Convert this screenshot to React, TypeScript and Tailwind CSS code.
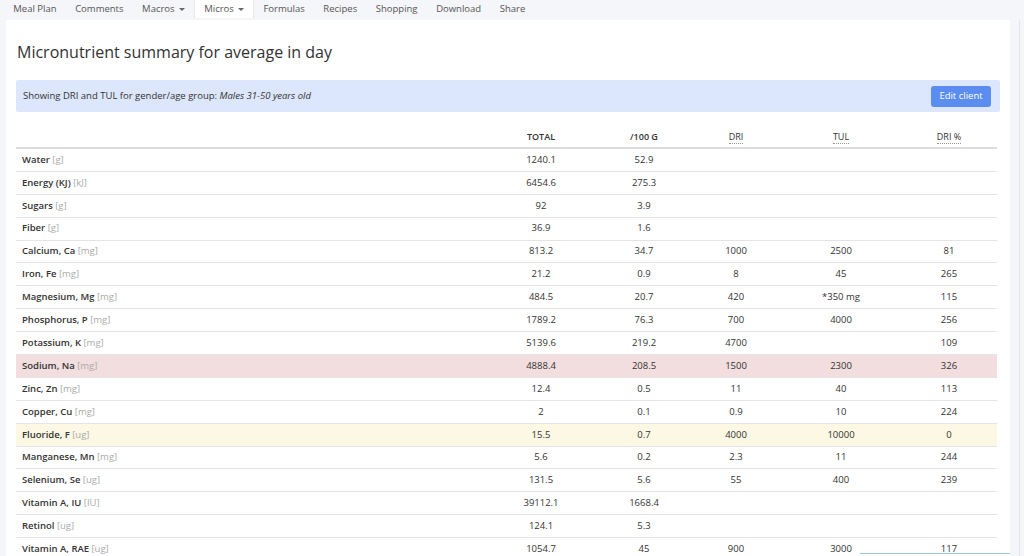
import React from "react";

type Row = { name: string; unit: string; total: string; per: string; dri?: string; tul?: string; pct?: string; tone?: "red" | "yellow" };

const rows: Row[] = [
  { name: "Water", unit: "[g]", total: "1240.1", per: "52.9" },
  { name: "Energy (KJ)", unit: "[kJ]", total: "6454.6", per: "275.3" },
  { name: "Sugars", unit: "[g]", total: "92", per: "3.9" },
  { name: "Fiber", unit: "[g]", total: "36.9", per: "1.6" },
  { name: "Calcium, Ca", unit: "[mg]", total: "813.2", per: "34.7", dri: "1000", tul: "2500", pct: "81" },
  { name: "Iron, Fe", unit: "[mg]", total: "21.2", per: "0.9", dri: "8", tul: "45", pct: "265" },
  { name: "Magnesium, Mg", unit: "[mg]", total: "484.5", per: "20.7", dri: "420", tul: "*350 mg", pct: "115" },
  { name: "Phosphorus, P", unit: "[mg]", total: "1789.2", per: "76.3", dri: "700", tul: "4000", pct: "256" },
  { name: "Potassium, K", unit: "[mg]", total: "5139.6", per: "219.2", dri: "4700", tul: "", pct: "109" },
  { name: "Sodium, Na", unit: "[mg]", total: "4888.4", per: "208.5", dri: "1500", tul: "2300", pct: "326", tone: "red" },
  { name: "Zinc, Zn", unit: "[mg]", total: "12.4", per: "0.5", dri: "11", tul: "40", pct: "113" },
  { name: "Copper, Cu", unit: "[mg]", total: "2", per: "0.1", dri: "0.9", tul: "10", pct: "224" },
  { name: "Fluoride, F", unit: "[ug]", total: "15.5", per: "0.7", dri: "4000", tul: "10000", pct: "0", tone: "yellow" },
  { name: "Manganese, Mn", unit: "[mg]", total: "5.6", per: "0.2", dri: "2.3", tul: "11", pct: "244" },
  { name: "Selenium, Se", unit: "[ug]", total: "131.5", per: "5.6", dri: "55", tul: "400", pct: "239" },
  { name: "Vitamin A, IU", unit: "[IU]", total: "39112.1", per: "1668.4" },
  { name: "Retinol", unit: "[ug]", total: "124.1", per: "5.3" },
  { name: "Vitamin A, RAE", unit: "[ug]", total: "1054.7", per: "45", dri: "900", tul: "3000", pct: "117" },
];

const tabs = ["Meal Plan", "Comments", "Macros", "Micros", "Formulas", "Recipes", "Shopping", "Download", "Share"];

function Caret() {
  return <span className="ml-[4px] inline-block align-middle border-x-[3px] border-t-[3px] border-x-transparent border-t-[#666]" />;
}

export default function App() {
  const cols = "grid grid-cols-[469px_112px_94px_90px_120px_96px]";
  return (
    <div className="relative h-[556px] w-[1024px] overflow-hidden bg-[#f5f6f9] text-[#333]" style={{ fontFamily: "'Open Sans', 'Liberation Sans', sans-serif" }}>
      <div className="flex h-[18px] items-stretch pl-[4px] text-[9.5px] text-[#555]">
        {tabs.map((t) => (
          <div
            key={t}
            className={
              "flex items-center px-[9.3px] " +
              (t === "Micros" ? "bg-white border-x border-[#e6e8ec]" : "")
            }
          >
            {t}
            {(t === "Macros" || t === "Micros") && <Caret />}
          </div>
        ))}
      </div>
      <div className="flex">
        <div className="ml-[6px] mt-[2px] h-[540px] w-[1004px] bg-white px-[10px] pt-[22px]">
          <h1 className="pl-[1px] text-[16px] font-medium leading-[21px] text-[#333]">Micronutrient summary for average in day</h1>
          <div className="mt-[17px] flex h-[32px] items-center justify-between rounded-[2px] bg-[#dce6fc] pl-[7px] pr-[9px] text-[9.5px] text-[#333]">
            <span>
              Showing DRI and TUL for gender/age group: <i>Males 31-50 years old</i>
            </span>
            <button className="h-[21px] w-[60px] rounded-[3px] bg-[#5b8cf0] text-[9.5px] text-white">Edit client</button>
          </div>
          <div className="mt-[13px] w-[981px] text-[9.5px]">
            <div className={cols + " h-[24px] items-center border-b-2 border-[#ddd] pt-[2px] text-[9px] font-semibold uppercase"}>
              <div />
              <div className="text-center">Total</div>
              <div className="text-center">/100 g</div>
              <div className="text-center">
                <span className="border-b border-dotted border-[#999] font-normal">DRI</span>
              </div>
              <div className="text-center">
                <span className="border-b border-dotted border-[#999] font-normal">TUL</span>
              </div>
              <div className="text-center">
                <span className="border-b border-dotted border-[#999] font-normal">DRI %</span>
              </div>
            </div>
            {rows.map((r) => (
              <div
                key={r.name}
                className={
                  cols +
                  " h-[22.9px] items-center border-b border-[#e4e4e4] " +
                  (r.tone === "red" ? "bg-[#f2dede]" : r.tone === "yellow" ? "bg-[#fcf8e3]" : "")
                }
              >
                <div className="pl-[6px]">
                  <span className="font-semibold text-[#333]">{r.name}</span>{" "}
                  <span className="text-[#aaa]">{r.unit}</span>
                </div>
                <div className="text-center">{r.total}</div>
                <div className="text-center">{r.per}</div>
                <div className="text-center">{r.dri}</div>
                <div className="text-center">{r.tul}</div>
                <div className="text-center">{r.pct}</div>
              </div>
            ))}
          </div>
        </div>
        <div className="ml-[9px] mt-[2px] h-[540px] w-px bg-[#e3e5ea]" />
      </div>
      <div className="absolute bottom-0 left-[860px] h-[3px] w-[150px] border-t border-[#9cc4d8] bg-white" />
    </div>
  );
}
